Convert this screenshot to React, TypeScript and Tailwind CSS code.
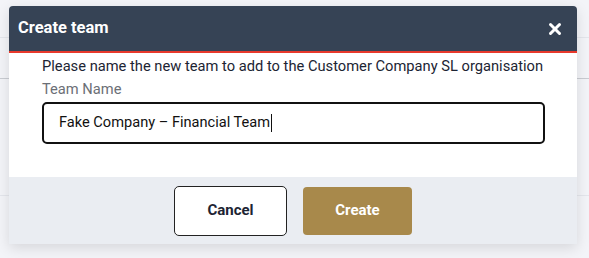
import { X } from "lucide-react";

export default function App() {
  return (
    <div className="relative h-[258px] w-[589px] overflow-hidden bg-[#f3f4f8] font-['Roboto',sans-serif]">
      {/* Page behind the dialog */}
      <div className="h-[38px] border-b border-[#e4e6ec]" />
      <div className="h-[41px] border-b border-[#c9ccd2]" />
      <div className="h-[117px] border-b border-[#e4e6ec]" />

      {/* Dialog */}
      <div className="absolute left-[9px] top-[6px] w-[568px] overflow-hidden rounded-t-[4px] shadow-[0_4px_14px_rgba(0,0,0,0.12)]">
        <div className="flex h-[47px] items-center justify-between border-b-2 border-[#e8392c] bg-[#364355] pl-[9px] pr-[13px]">
          <h2 className="text-[16.5px] font-bold text-white">Create team</h2>
          <X className="size-[18px] text-white" strokeWidth={4} />
        </div>

        <div className="flex h-[124px] flex-col bg-white px-[33px] pt-[1px]">
          <p className="whitespace-nowrap text-[14.7px] leading-[24px] text-[#1c2433]">
            Please name the new team to add to the Customer Company SL organisation
          </p>
          <label className="text-[14.7px] leading-[22px] text-[#6b6f76]">Team Name</label>
          <div className="mt-[2px] flex h-[42px] w-[503px] items-center rounded-[5px] border-2 border-[#111] px-[15px] text-[14.6px] text-[#111]">
            Fake Company – Financial Team
            <span className="ml-[1px] h-[18px] w-px bg-[#111]" />
          </div>
        </div>

        <div className="flex h-[67px] items-center justify-center gap-[16px] bg-[#eaedf2]">
          <button className="h-[50px] w-[113px] rounded-[5px] border border-[#222] bg-white text-[15px] font-bold text-[#1c2433]">
            Cancel
          </button>
          <button className="h-[48px] w-[109px] rounded-[4px] bg-[#a8894b] text-[15px] font-bold text-white">
            Create
          </button>
        </div>
      </div>
    </div>
  );
}
